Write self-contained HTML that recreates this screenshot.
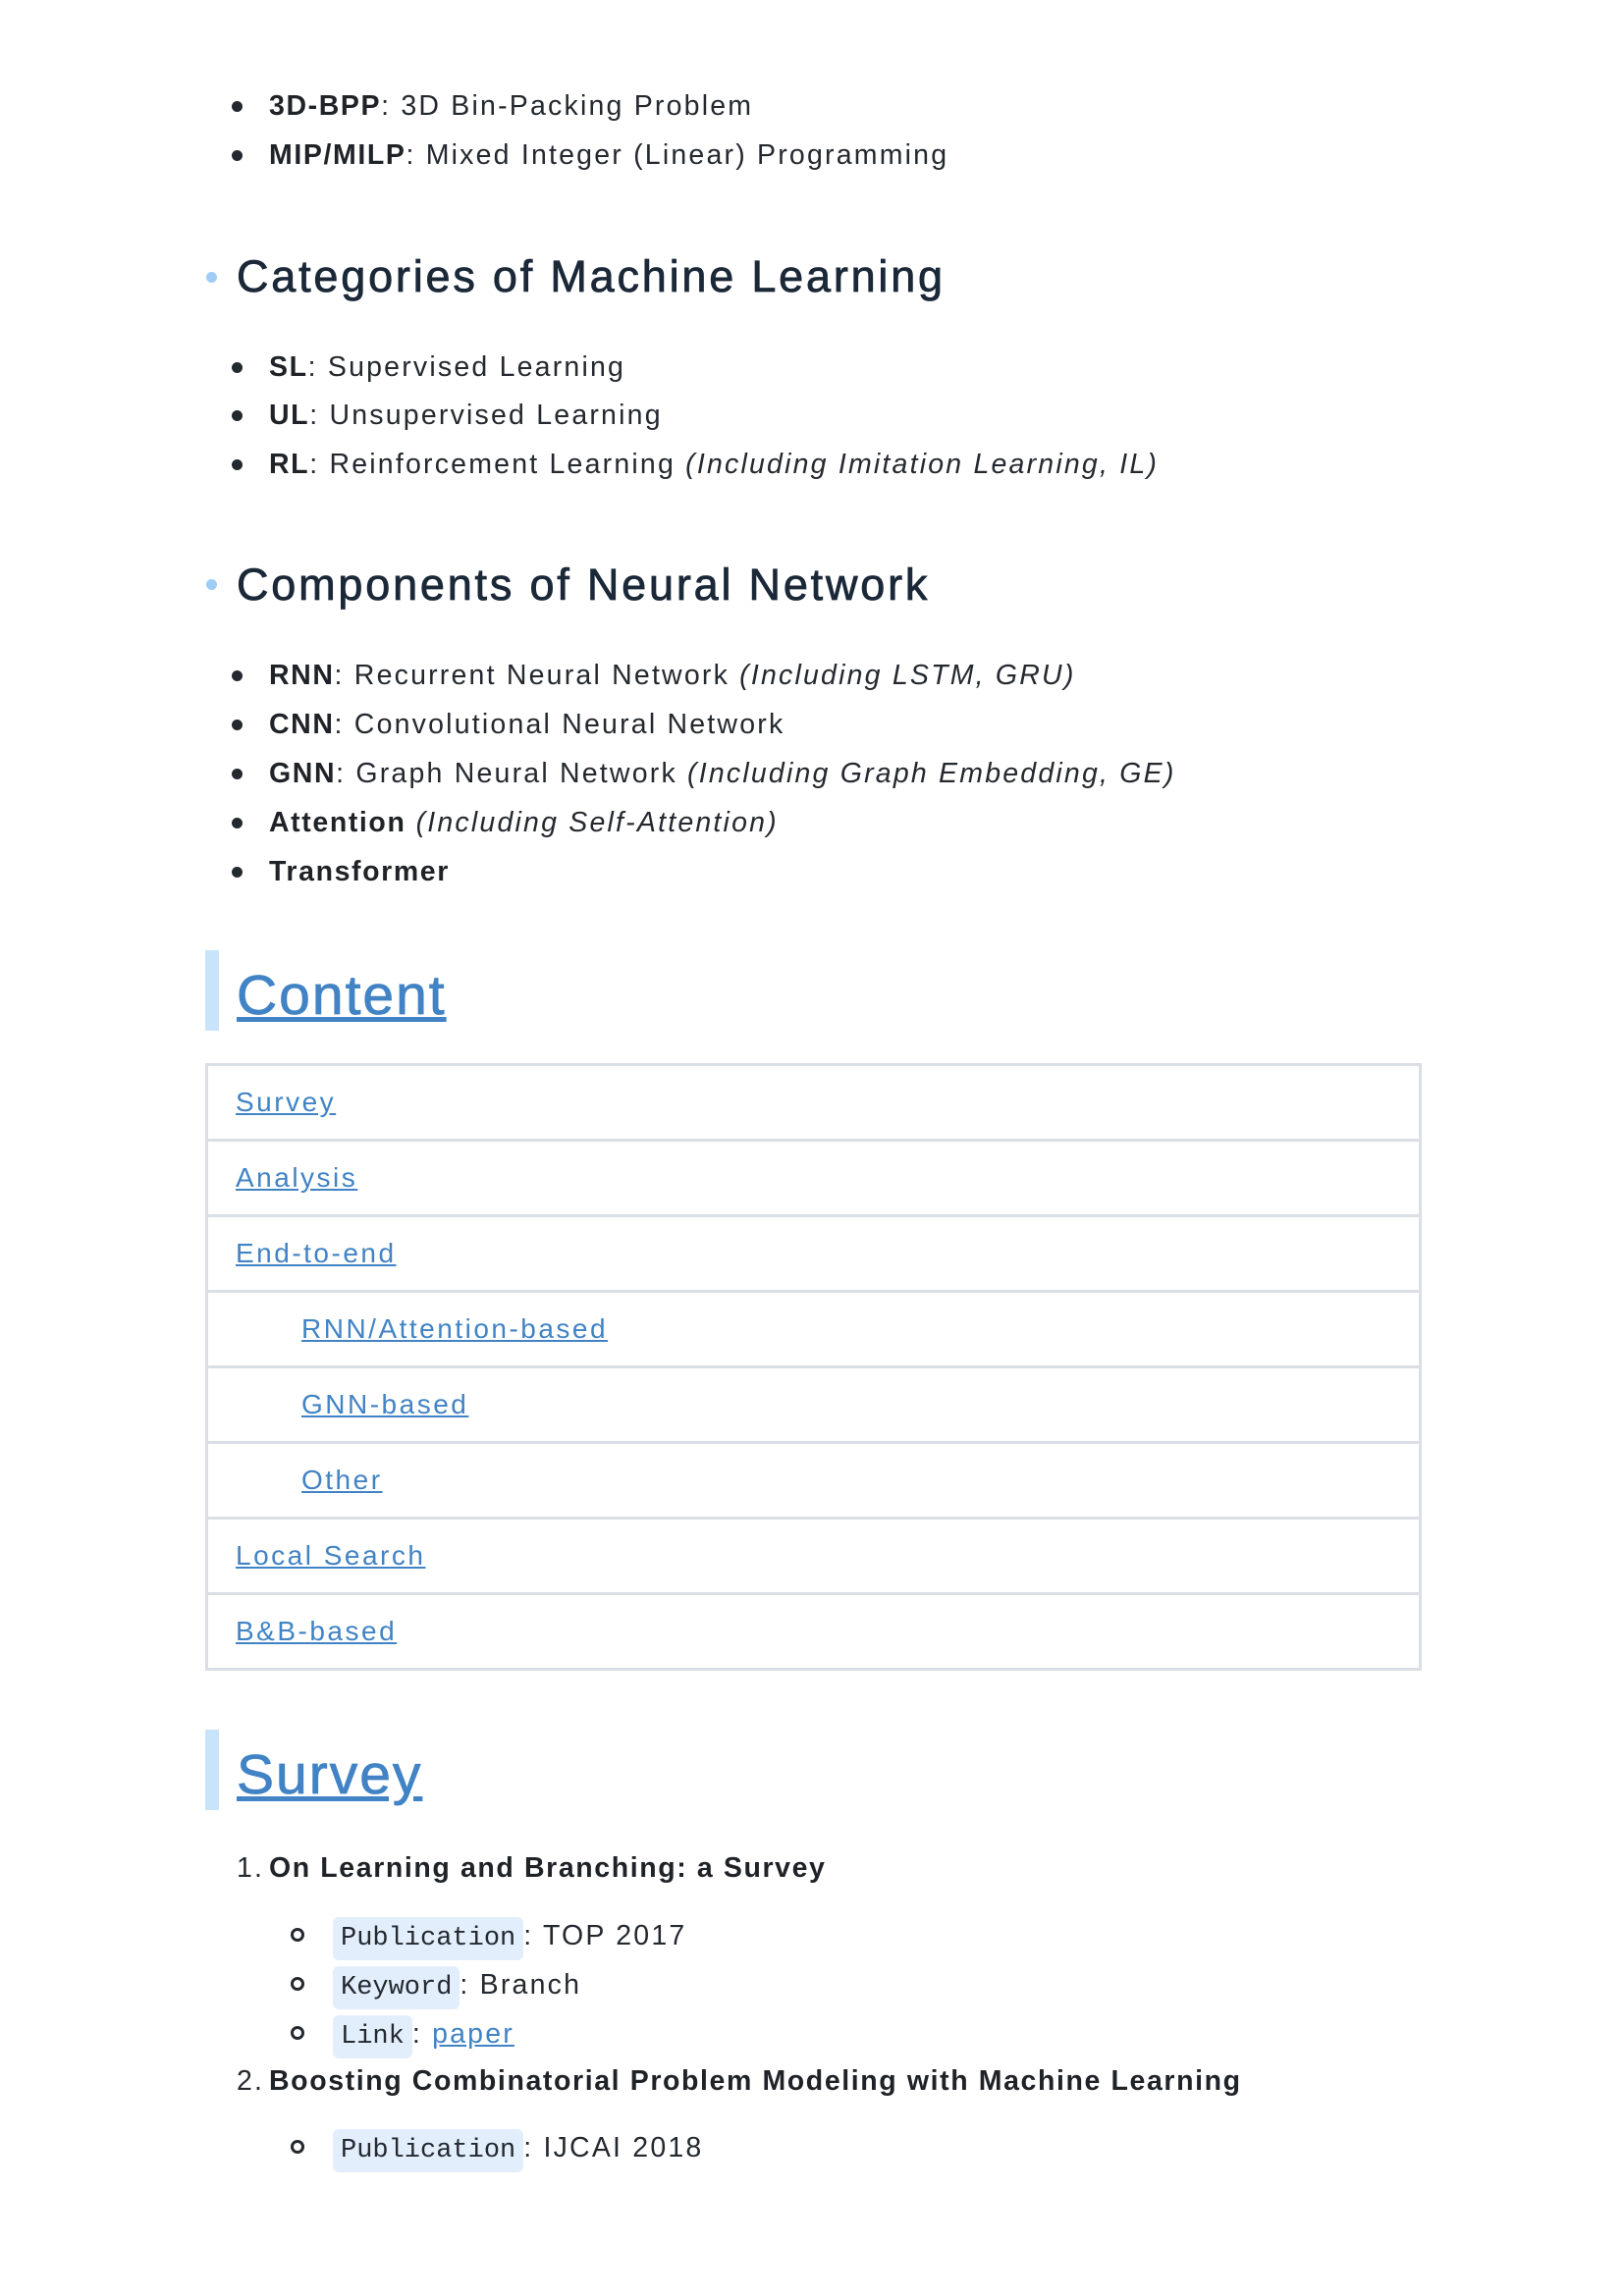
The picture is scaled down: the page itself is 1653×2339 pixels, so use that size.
<!DOCTYPE html>
<html><head><meta charset="utf-8"><style>
html,body{margin:0;padding:0;background:#fff;}
body{width:1653px;height:2339px;position:relative;overflow:hidden;font-family:"Liberation Sans",sans-serif;color:#24292f;}
.l{position:absolute;left:274px;height:50px;line-height:50px;font-size:28.5px;letter-spacing:2.2px;white-space:nowrap;}
.l b{font-weight:bold;color:#1f2328;letter-spacing:1.6px;}
.d{position:absolute;width:11px;height:11px;border-radius:50%;background:#24292f;}
.h2{position:absolute;left:241px;height:60px;line-height:60px;font-size:45px;letter-spacing:2.8px;color:#1b2838;white-space:nowrap;-webkit-text-stroke:0.8px #1b2838;}
.hd{position:absolute;left:210px;width:11px;height:11px;border-radius:50%;background:#9fcdf5;}
.h1{position:absolute;left:241px;height:80px;line-height:80px;font-size:57px;letter-spacing:2px;white-space:nowrap;-webkit-text-stroke:0.8px #4183c4;}
.h1 a,a{color:#4183c4;text-decoration:underline;}
.bar{position:absolute;left:209px;width:14px;background:#c9e3fb;}
table{position:absolute;left:209px;top:1083px;width:1239px;border-collapse:collapse;}
td{border:3px solid #dadee5;height:74px;padding:0 0 0 28px;font-size:28px;letter-spacing:2.5px;}
td.i{padding-left:95px;}
code{font-family:"Liberation Mono",monospace;font-size:27px;letter-spacing:0;background:#e3eefd;border-radius:6px;padding:7px 8px;color:#24292f;}
.c{position:absolute;left:296px;width:8px;height:8px;border:3px solid #24292f;border-radius:50%;}
</style></head><body>

<div class="d" style="left:236px;top:103px"></div><div class="l" style="top:83px"><b>3D-BPP</b>: 3D Bin-Packing Problem</div>
<div class="d" style="left:236px;top:153px"></div><div class="l" style="top:133px"><b>MIP/MILP</b>: Mixed Integer (Linear) Programming</div>

<div class="hd" style="top:277px"></div><div class="h2" style="top:252px">Categories of Machine Learning</div>

<div class="d" style="left:236px;top:369px"></div><div class="l" style="top:349px"><b>SL</b>: Supervised Learning</div>
<div class="d" style="left:236px;top:418px"></div><div class="l" style="top:398px"><b>UL</b>: Unsupervised Learning</div>
<div class="d" style="left:236px;top:468px"></div><div class="l" style="top:448px"><b>RL</b>: Reinforcement Learning <i>(Including Imitation Learning, IL)</i></div>

<div class="hd" style="top:590px"></div><div class="h2" style="top:566px">Components of Neural Network</div>

<div class="d" style="left:236px;top:683px"></div><div class="l" style="top:663px"><b>RNN</b>: Recurrent Neural Network <i>(Including LSTM, GRU)</i></div>
<div class="d" style="left:236px;top:733px"></div><div class="l" style="top:713px"><b>CNN</b>: Convolutional Neural Network</div>
<div class="d" style="left:236px;top:783px"></div><div class="l" style="top:763px"><b>GNN</b>: Graph Neural Network <i>(Including Graph Embedding, GE)</i></div>
<div class="d" style="left:236px;top:833px"></div><div class="l" style="top:813px"><b>Attention</b> <i>(Including Self-Attention)</i></div>
<div class="d" style="left:236px;top:883px"></div><div class="l" style="top:863px"><b>Transformer</b></div>

<div class="bar" style="top:968px;height:82px"></div>
<div class="h1" style="top:974px"><a>Content</a></div>

<table>
<tr><td><a>Survey</a></td></tr>
<tr><td><a>Analysis</a></td></tr>
<tr><td><a>End-to-end</a></td></tr>
<tr><td class="i"><a>RNN/Attention-based</a></td></tr>
<tr><td class="i"><a>GNN-based</a></td></tr>
<tr><td class="i"><a>Other</a></td></tr>
<tr><td><a>Local Search</a></td></tr>
<tr><td><a>B&amp;B-based</a></td></tr>
</table>

<div class="bar" style="top:1762px;height:82px"></div>
<div class="h1" style="top:1768px"><a>Survey</a></div>

<div class="l" style="left:241px;top:1878px">1.</div><div class="l" style="top:1878px"><b>On Learning and Branching: a Survey</b></div>
<div class="c" style="top:1964px"></div><div class="l" style="left:339px;top:1947px"><code>Publication</code>: TOP 2017</div>
<div class="c" style="top:2014px"></div><div class="l" style="left:339px;top:1997px"><code>Keyword</code>: Branch</div>
<div class="c" style="top:2064px"></div><div class="l" style="left:339px;top:2047px"><code>Link</code>: <a>paper</a></div>
<div class="l" style="left:241px;top:2095px">2.</div><div class="l" style="top:2095px"><b>Boosting Combinatorial Problem Modeling with Machine Learning</b></div>
<div class="c" style="top:2180px"></div><div class="l" style="left:339px;top:2163px"><code>Publication</code>: IJCAI 2018</div>

</body></html>
